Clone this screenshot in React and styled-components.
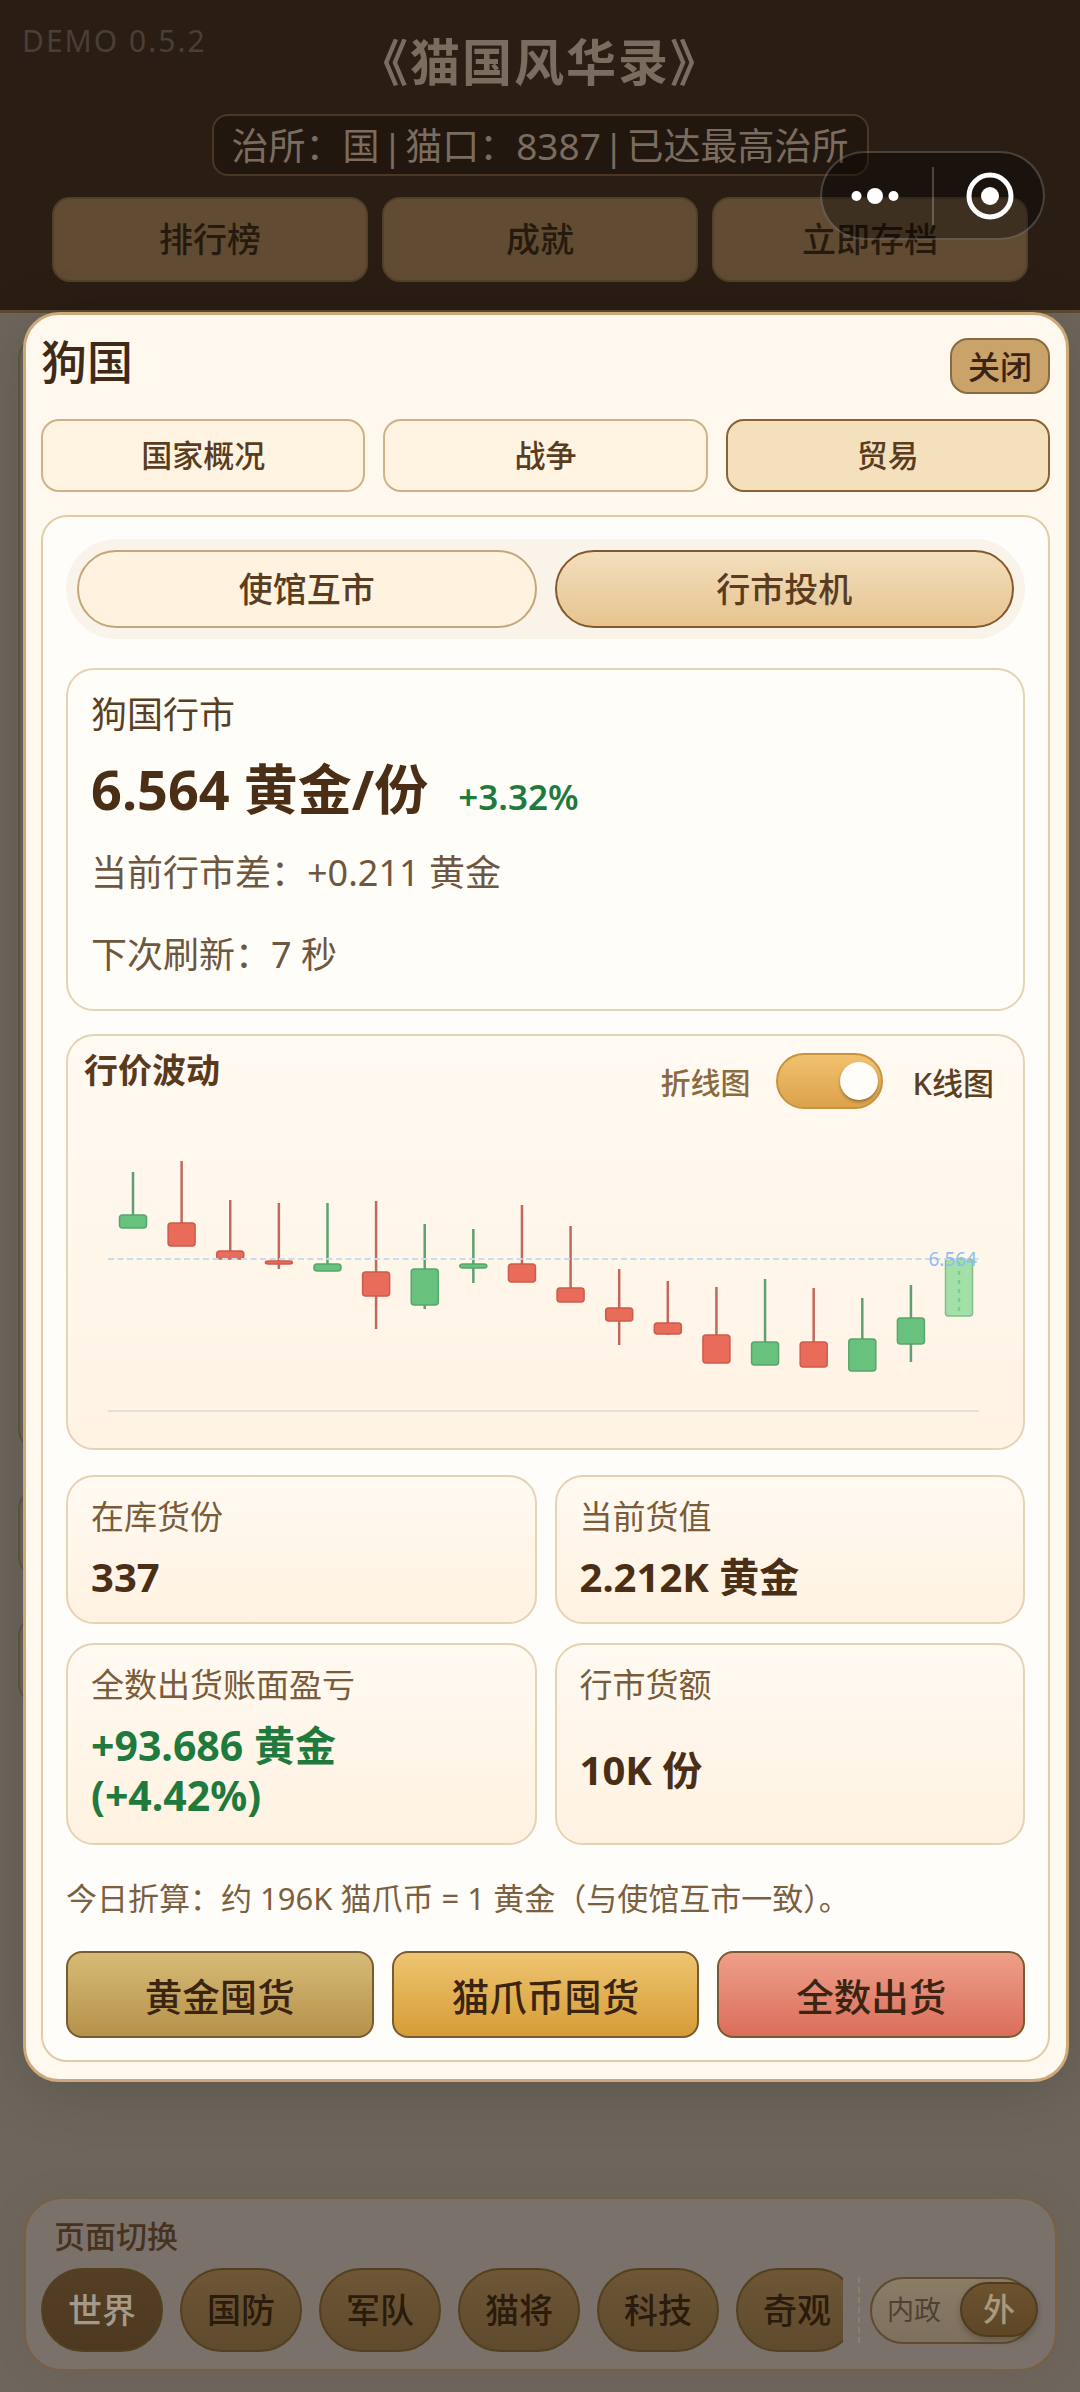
import React from 'react';
import styled, {createGlobalStyle} from 'styled-components';

const GlobalStyle = createGlobalStyle`
  html, body {
    margin: 0;
    padding: 0;
    background: #6e665c;
  }
  * {
    box-sizing: border-box;
  }
  body {
    font-family: "Noto Sans", "Noto Sans CJK SC", sans-serif;
  }
`;

const Page = styled.div`
  position: relative;
  width: 1080px;
  height: 2392px;
  overflow: hidden;
  display: flex;
  flex-direction: column;
  background: #6e665c;
`;

const Header = styled.header`
  position: relative;
  height: 313px;
  padding-top: 30px;
  display: flex;
  flex-direction: column;
  align-items: center;
  background: #2a1d14;
  border-bottom: 3px solid #5c4a31;
`;

const DemoTag = styled.div`
  position: absolute;
  left: 22px;
  top: 23px;
  font-size: 30px;
  line-height: 36px;
  letter-spacing: 2px;
  color: #4a3f35;
`;

const GameTitle = styled.h1`
  margin: 0;
  font-size: 50px;
  line-height: 64px;
  font-weight: 700;
  letter-spacing: 2px;
  color: #7a6d60;
`;

const StatusPill = styled.div`
  margin-top: 20px;
  height: 62px;
  width: 657px;
  padding-bottom: 2px;
  display: flex;
  align-items: center;
  justify-content: center;
  white-space: nowrap;
  font-size: 37px;
  word-spacing: -7px;
  color: #7a6d5f;
  background: #21170f;
  border: 2px solid #4a3725;
  border-radius: 16px;
`;

const HeaderButtons = styled.div`
  margin-top: 21px;
  width: 976px;
  display: grid;
  grid-template-columns: repeat(3, 1fr);
  gap: 14px;
`;

const HeaderButton = styled.div`
  height: 85px;
  padding-bottom: 4px;
  display: flex;
  align-items: center;
  justify-content: center;
  font-size: 34px;
  font-weight: 500;
  color: #261a0e;
  background: #614c33;
  border: 2px solid #52402b;
  border-radius: 18px;
`;

const Capsule = styled.div`
  position: absolute;
  left: 820px;
  top: 151px;
  width: 225px;
  height: 89px;
  display: flex;
  align-items: center;
  background: rgba(0, 0, 0, 0.36);
  border: 2px solid rgba(255, 255, 255, 0.2);
  border-radius: 45px;
`;

const CapsulePart = styled.div`
  flex: 1;
  display: flex;
  align-items: center;
  justify-content: center;
  padding: ${p => (p.$end ? '0 0 0 4px' : '0 4px 0 0')};
`;

const CapsuleDivider = styled.div`
  width: 2px;
  height: 58px;
  background: rgba(255, 255, 255, 0.22);
`;

const Backdrop = styled.main`
  flex: 1;
  display: flex;
  flex-direction: column;
`;

const WorldList = styled.div`
  flex: 1;
  padding: 22px 18px 0;
  display: flex;
  flex-direction: column;
  gap: 33px;
`;

const WorldCard = styled.div`
  height: ${p => p.$height}px;
  border: 2px solid #625644;
  border-radius: 24px;
`;

const BottomBar = styled.div`
  padding: 0 23px 21px 24px;
`;

const PageSwitch = styled.nav`
  height: 174px;
  padding: 17px 0 0 15px;
  background: #7a716a;
  border: 2px solid #7a6040;
  border-radius: 38px;
  box-shadow: 0 0 30px rgba(90, 80, 70, 0.2);
`;

const PageSwitchLabel = styled.div`
  height: 40px;
  padding-left: 13px;
  font-size: 31px;
  line-height: 40px;
  font-weight: 500;
  color: #46331f;
`;

const PageSwitchRow = styled.div`
  margin-top: 12px;
  display: flex;
  align-items: center;
`;

const PillScroller = styled.div`
  width: 802px;
  display: flex;
  gap: 17px;
  overflow: hidden;
`;

const PagePill = styled.div`
  flex: 0 0 122px;
  height: 84px;
  padding-bottom: 4px;
  display: flex;
  align-items: center;
  justify-content: center;
  font-size: 34px;
  font-weight: 500;
  color: ${p => (p.$active ? '#a39a8c' : '#2b1b0c')};
  background: ${p => (p.$active ? 'linear-gradient(#543f25, #4d3920)' : 'linear-gradient(#6e5636, #5e4a2d)')};
  border: 2px solid #52401f;
  border-radius: 42px;
`;

const DashedDivider = styled.div`
  width: 0;
  height: 66px;
  margin: 0 10px 0 15px;
  border-left: 2px dashed #8e7e68;
`;

const DomainToggle = styled.div`
  position: relative;
  width: 165px;
  height: 67px;
  padding: 0 0 3px 15px;
  display: flex;
  align-items: center;
  font-size: 27px;
  color: #4f4131;
  background: linear-gradient(#8a7c66, #7d705e);
  border: 2px solid #5f4a2e;
  border-radius: 34px;
`;

const DomainThumb = styled.div`
  position: absolute;
  left: 88px;
  top: 3px;
  width: 78px;
  height: 55px;
  padding-bottom: 4px;
  display: flex;
  align-items: center;
  justify-content: center;
  font-size: 32px;
  font-weight: 500;
  color: #a8997f;
  background: linear-gradient(#6e5230, #5e4626);
  border: 2px solid #4e3b20;
  border-radius: 28px;
  box-shadow: 0 3px 6px rgba(50, 35, 15, 0.3);
`;

const Modal = styled.section`
  position: absolute;
  left: 23px;
  top: 312px;
  width: 1046px;
  height: 1770px;
  padding: 0 16px 0 15px;
  background: #fff8ee;
  border: 3px solid #cda97a;
  border-radius: 36px;
  box-shadow: 0 10px 60px rgba(0, 0, 0, 0.16);
`;

const ModalHead = styled.div`
  padding-top: 23px;
  display: flex;
  justify-content: space-between;
  align-items: flex-start;
`;

const CountryName = styled.h2`
  margin: 0;
  font-size: 46px;
  line-height: 46px;
  font-weight: 500;
  color: #3f2a17;
`;

const CloseButton = styled.div`
  width: 100px;
  height: 56px;
  padding-bottom: 3px;
  display: flex;
  align-items: center;
  justify-content: center;
  font-size: 32px;
  font-weight: 500;
  color: #3c2412;
  background: #c9a36a;
  border: 2px solid #8a6a3f;
  border-radius: 18px;
`;

const Tabs = styled.div`
  margin-top: 25px;
  display: grid;
  grid-template-columns: repeat(3, 1fr);
  gap: 18px;
`;

const Tab = styled.div`
  height: 73px;
  padding-bottom: 5px;
  display: flex;
  align-items: center;
  justify-content: center;
  font-size: 31px;
  font-weight: 500;
  color: #5a3d20;
  background: ${p => (p.$active ? '#f5e0bd' : '#fff4e2')};
  border: 2px solid ${p => (p.$active ? '#8a6233' : '#cdb38a')};
  border-radius: 18px;
`;

const Panel = styled.div`
  height: 1547px;
  margin-top: 23px;
  padding: 22px 23px;
  background: #fffdf9;
  border: 2px solid #e2cca6;
  border-radius: 26px;
`;

const Segmented = styled.div`
  height: 100px;
  padding: 11px;
  display: grid;
  grid-template-columns: 1fr 1fr;
  gap: 18px;
  background: #faf3ea;
  border-radius: 50px;
`;

const SegmentButton = styled.div`
  padding-bottom: 4px;
  display: flex;
  align-items: center;
  justify-content: center;
  font-size: 34px;
  font-weight: 500;
  color: #5a3d20;
  background: ${p => (p.$active ? 'linear-gradient(#f3dfbd, #e6c48f)' : '#fff3e0')};
  border: 2px solid ${p => (p.$active ? '#84582c' : '#c4a678')};
  border-radius: 39px;
`;

const QuoteCard = styled.div`
  height: 343px;
  margin-top: 29px;
  padding: 20px 23px 0;
  background: #fffdf8;
  border: 2px solid #e5d3b5;
  border-radius: 28px;
`;

const QuoteLabel = styled.div`
  font-size: 36px;
  line-height: 50px;
  color: #5a3f24;
`;

const PriceRow = styled.div`
  margin-top: 14px;
  display: flex;
  align-items: baseline;
  gap: 30px;
  line-height: 70px;
`;

const Price = styled.span`
  font-size: 54px;
  font-weight: 700;
  color: #4a2f16;
`;

const Change = styled.span`
  font-size: 35px;
  font-weight: 600;
  color: #1f7a3d;
`;

const QuoteLine = styled.div`
  margin-top: ${p => p.$gap}px;
  font-size: 36px;
  line-height: 50px;
  color: #6e5640;
`;

const ChartCard = styled.div`
  height: 416px;
  margin-top: 23px;
  background: linear-gradient(#fffaf2, #fff3e4);
  border: 2px solid #e5d3b5;
  border-radius: 28px;
`;

const ChartHead = styled.div`
  height: 79px;
  padding: 17px 29px 0 16px;
  display: flex;
  justify-content: space-between;
  align-items: flex-start;
`;

const ChartTitle = styled.div`
  margin-top: -3px;
  font-size: 34px;
  line-height: 40px;
  font-weight: 700;
  color: #5a3a1c;
`;

const ChartMode = styled.div`
  display: flex;
  align-items: center;
  gap: 26px;
`;

const ModeLabel = styled.span`
  margin-left: ${p => (p.$active ? '3px' : '0')};
  font-size: ${p => (p.$active ? '31px' : '30px')};
  font-weight: 500;
  color: ${p => (p.$active ? '#5c3f1f' : '#8a6a3f')};
`;

const Switch = styled.div`
  position: relative;
  width: 107px;
  height: 56px;
  background: linear-gradient(#f1c26f, #dca24c);
  border: 2px solid #c8933f;
  border-radius: 28px;
`;

const SwitchThumb = styled.div`
  position: absolute;
  right: 3px;
  top: 7px;
  width: 38px;
  height: 38px;
  background: #fffdf8;
  border-radius: 50%;
  box-shadow: 0 2px 3px rgba(80, 60, 30, 0.5);
`;

const ChartSvg = styled.svg`
  display: block;
`;

const Stats = styled.div`
  margin-top: 25px;
  display: grid;
  grid-template-columns: 1fr 1fr;
  grid-template-rows: 149px 202px;
  gap: 19px 18px;
`;

const StatCard = styled.div`
  padding: 18px 23px 0;
  background: linear-gradient(#fffaf2, #fff2e1);
  border: 2px solid #e5d3b5;
  border-radius: 28px;
`;

const StatLabel = styled.div`
  font-size: 33px;
  line-height: 44px;
  color: #7a5c3a;
`;

const StatValue = styled.div`
  margin-top: 13px;
  min-height: ${p => (p.$tall ? '100px' : '50px')};
  display: ${p => (p.$tall ? 'flex' : 'block')};
  align-items: center;
  font-size: ${p => (p.$gain ? '41px' : '40px')};
  line-height: 50px;
  font-weight: 700;
  color: ${p => (p.$gain ? '#1f7a3d' : '#4a2f16')};
`;

const Note = styled.div`
  margin-top: 33px;
  font-size: 31px;
  line-height: 40px;
  white-space: nowrap;
  color: #7a6040;
`;

const Actions = styled.div`
  margin-top: 33px;
  display: grid;
  grid-template-columns: repeat(3, 1fr);
  gap: 18px;
`;

const ActionButton = styled.div`
  height: 87px;
  display: flex;
  align-items: center;
  justify-content: center;
  font-size: 37.5px;
  font-weight: 500;
  color: #3c2412;
  background: ${p => p.$fill};
  border: 2px solid #7a5a30;
  border-radius: 16px;
`;

// top and bottom are the wick ends, from and to the body
const candles = [
  {up: true, top: 1172, bottom: 1228, from: 1215, to: 1228},
  {up: false, top: 1161, bottom: 1246, from: 1223, to: 1246},
  {up: false, top: 1200, bottom: 1259, from: 1251, to: 1259},
  {up: false, top: 1203, bottom: 1269, from: 1261, to: 1264},
  {up: true, top: 1203, bottom: 1271, from: 1264, to: 1271},
  {up: false, top: 1201, bottom: 1329, from: 1272, to: 1296},
  {up: true, top: 1224, bottom: 1309, from: 1269, to: 1305},
  {up: true, top: 1229, bottom: 1283, from: 1264, to: 1268},
  {up: false, top: 1205, bottom: 1282, from: 1264, to: 1282},
  {up: false, top: 1226, bottom: 1302, from: 1288, to: 1302},
  {up: false, top: 1269, bottom: 1345, from: 1308, to: 1321},
  {up: false, top: 1281, bottom: 1335, from: 1323, to: 1334},
  {up: false, top: 1287, bottom: 1363, from: 1335, to: 1363},
  {up: true, top: 1279, bottom: 1365, from: 1342, to: 1365},
  {up: false, top: 1288, bottom: 1367, from: 1342, to: 1367},
  {up: true, top: 1298, bottom: 1371, from: 1339, to: 1371},
  {up: true, top: 1285, bottom: 1362, from: 1318, to: 1344},
];

const KLineChart = () => (
  <ChartSvg width="955" height="333" viewBox="68 1115 955 333">
    <line x1="108" y1="1411" x2="979" y2="1411" stroke="#e6dfd8" strokeWidth="2" />
    {candles.map((c, i) => {
      const x = 133 + i * 48.62;
      return (
        <g key={i}>
          <line x1={x} y1={c.top} x2={x} y2={c.bottom} stroke={c.up ? '#5fa070' : '#c0695c'} strokeWidth="2.5" />
          <rect
            x={x - 13.5}
            y={c.from}
            width="27"
            height={c.to - c.from}
            rx="3"
            fill={c.up ? '#68c27e' : '#e96c5a'}
            stroke={c.up ? '#55a76c' : '#cc5b4d'}
            strokeWidth="1.5"
          />
        </g>
      );
    })}
    <rect x="945.5" y="1259" width="27" height="57" rx="3" fill="#a3e0a8" stroke="#82bd8b" strokeWidth="1.5" />
    <line x1="959" y1="1262" x2="959" y2="1313" stroke="#82c98f" strokeWidth="2.5" strokeDasharray="4 5" />
    <line x1="108" y1="1259" x2="979" y2="1259" stroke="#c6dcf3" strokeWidth="2" strokeDasharray="6 3.5" />
    <text x="977" y="1266" textAnchor="end" fontSize="19" fill="#90bdf0" fontFamily="Noto Sans, sans-serif">6.564</text>
  </ChartSvg>
);

const pages = ['世界', '国防', '军队', '猫将', '科技', '奇观'];

const App = () => (
  <Page>
    <GlobalStyle />
    <Header>
      <DemoTag>DEMO 0.5.2</DemoTag>
      <GameTitle>《猫国风华录》</GameTitle>
      <StatusPill>治所：国 | 猫口：8387 | 已达最高治所</StatusPill>
      <HeaderButtons>
        <HeaderButton>排行榜</HeaderButton>
        <HeaderButton>成就</HeaderButton>
        <HeaderButton>立即存档</HeaderButton>
      </HeaderButtons>
      <Capsule>
        <CapsulePart>
          <svg width="50" height="20" viewBox="0 0 50 20">
            <circle cx="6.5" cy="10" r="5" fill="#fff" />
            <circle cx="25" cy="10" r="8" fill="#fff" />
            <circle cx="43.5" cy="10" r="5" fill="#fff" />
          </svg>
        </CapsulePart>
        <CapsuleDivider />
        <CapsulePart $end>
          <svg width="50" height="50" viewBox="0 0 50 50">
            <circle cx="25" cy="25" r="21" fill="none" stroke="#fff" strokeWidth="5" />
            <circle cx="25" cy="25" r="9" fill="#fff" />
          </svg>
        </CapsulePart>
      </Capsule>
    </Header>
    <Backdrop>
      <WorldList>
        <WorldCard $height={1118} />
        <WorldCard $height={94} />
        <WorldCard $height={94} />
      </WorldList>
      <BottomBar>
        <PageSwitch>
          <PageSwitchLabel>页面切换</PageSwitchLabel>
          <PageSwitchRow>
            <PillScroller>
              {pages.map((name, i) => (
                <PagePill key={name} $active={i === 0}>{name}</PagePill>
              ))}
            </PillScroller>
            <DashedDivider />
            <DomainToggle>
              内政
              <DomainThumb>外</DomainThumb>
            </DomainToggle>
          </PageSwitchRow>
        </PageSwitch>
      </BottomBar>
    </Backdrop>
    <Modal>
      <ModalHead>
        <CountryName>狗国</CountryName>
        <CloseButton>关闭</CloseButton>
      </ModalHead>
      <Tabs>
        <Tab>国家概况</Tab>
        <Tab>战争</Tab>
        <Tab $active>贸易</Tab>
      </Tabs>
      <Panel>
        <Segmented>
          <SegmentButton>使馆互市</SegmentButton>
          <SegmentButton $active>行市投机</SegmentButton>
        </Segmented>
        <QuoteCard>
          <QuoteLabel>狗国行市</QuoteLabel>
          <PriceRow>
            <Price>6.564 黄金/份</Price>
            <Change>+3.32%</Change>
          </PriceRow>
          <QuoteLine $gap={16}>当前行市差：+0.211 黄金</QuoteLine>
          <QuoteLine $gap={32}>下次刷新：7 秒</QuoteLine>
        </QuoteCard>
        <ChartCard>
          <ChartHead>
            <ChartTitle>行价波动</ChartTitle>
            <ChartMode>
              <ModeLabel>折线图</ModeLabel>
              <Switch><SwitchThumb /></Switch>
              <ModeLabel $active>K线图</ModeLabel>
            </ChartMode>
          </ChartHead>
          <KLineChart />
        </ChartCard>
        <Stats>
          <StatCard>
            <StatLabel>在库货份</StatLabel>
            <StatValue>337</StatValue>
          </StatCard>
          <StatCard>
            <StatLabel>当前货值</StatLabel>
            <StatValue>2.212K 黄金</StatValue>
          </StatCard>
          <StatCard>
            <StatLabel>全数出货账面盈亏</StatLabel>
            <StatValue $gain>+93.686 黄金<br />(+4.42%)</StatValue>
          </StatCard>
          <StatCard>
            <StatLabel>行市货额</StatLabel>
            <StatValue $tall>10K 份</StatValue>
          </StatCard>
        </Stats>
        <Note>今日折算：约 196K 猫爪币 = 1 黄金（与使馆互市一致）。</Note>
        <Actions>
          <ActionButton $fill="linear-gradient(#d6bb76, #b5924a)">黄金囤货</ActionButton>
          <ActionButton $fill="linear-gradient(#eec571, #d69c36)">猫爪币囤货</ActionButton>
          <ActionButton $fill="linear-gradient(#ef9f8a, #d96e5a)">全数出货</ActionButton>
        </Actions>
      </Panel>
    </Modal>
  </Page>
);

export default App;
